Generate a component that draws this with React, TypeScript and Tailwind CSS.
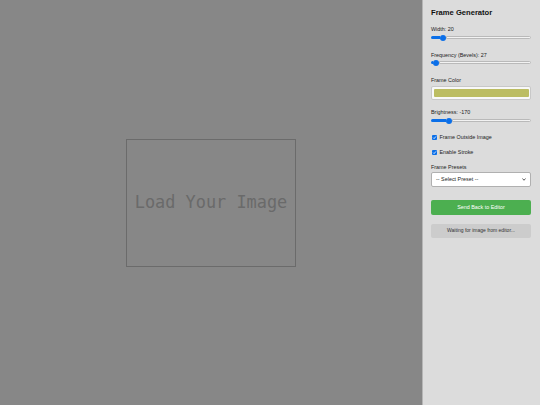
import React from "react";

function Slider({ fill }: { fill: string }) {
  return (
    <div className="flex items-center h-[7px] w-full">
      <div className={`${fill} h-[3px] bg-[#0b6fe8] rounded-l-full`} />
      <div className="w-[6px] h-[6px] rounded-full bg-[#0b6fe8] shrink-0" />
      <div className="flex-1 h-[2.5px] bg-[#f2f2f2] border border-[#b9b9b9] rounded-r-full" />
    </div>
  );
}

function Check({ label }: { label: string }) {
  return (
    <div className="flex items-center h-[7px] pl-[1px]">
      <svg width="5" height="5" viewBox="0 0 10 10" className="shrink-0">
        <rect x="0" y="0" width="10" height="10" rx="2" fill="#0b6fe8" />
        <path d="M2.2 5.2 L4.2 7.2 L8 2.8" stroke="#fff" strokeWidth="1.6" fill="none" />
      </svg>
      <span className="ml-[2.5px] text-[5.4px] leading-[7px] text-[#222]">{label}</span>
    </div>
  );
}

export default function App() {
  return (
    <div className="w-[540px] h-[405px] flex font-['Liberation_Sans',Arial,sans-serif]">
      {/* Canvas */}
      <div className="flex-1 bg-[#878787] flex items-center justify-center">
        <div className="w-[170px] h-[128px] border border-[#6b6b6b] flex items-center justify-center">
          <span className="font-['DejaVu_Sans_Mono',monospace] text-[16.9px] text-[#6a6a6a]">
            Load Your Image
          </span>
        </div>
      </div>

      {/* Sidebar */}
      <div className="w-[118px] bg-[#dcdcdc] border-l border-[#b5b5b5] pl-[8px] pr-[9px] pt-[8px] flex flex-col text-[#222]">
        <h2 className="text-[7.6px] leading-[9px] font-bold text-[#111]">Frame Generator</h2>

        <div className="mt-[9px] text-[5.4px] leading-[7px]">Width: 20</div>
        <div className="mt-[1px]"><Slider fill="w-[9px]" /></div>

        <div className="mt-[10.5px] text-[5.4px] leading-[7px]">Frequency (Bevels): 27</div>
        <div className="mt-[0.5px]"><Slider fill="w-[2px]" /></div>

        <div className="mt-[10.5px] text-[5.4px] leading-[7px]">Frame Color</div>
        <div className="mt-[2.5px] h-[13.5px] rounded-[2px] border border-[#c8c8c8] bg-[#f8f8f8] p-[1.5px]">
          <div className="w-full h-full bg-[#bcbd62] rounded-[1px]" />
        </div>

        <div className="mt-[9px] text-[5.4px] leading-[7px]">Brightness: -170</div>
        <div className="mt-[1.5px]"><Slider fill="w-[15px]" /></div>

        <div className="mt-[10px]"><Check label="Frame Outside Image" /></div>
        <div className="mt-[8px]"><Check label="Enable Stroke" /></div>

        <div className="mt-[7.5px] text-[5.4px] leading-[7px]">Frame Presets</div>
        <div className="mt-[1.5px] h-[15px] bg-white border border-[#b0b0b0] rounded-[2px] flex items-center justify-between px-[4px]">
          <span className="text-[5.4px] text-[#222]">-- Select Preset --</span>
          <svg width="4" height="3" viewBox="0 0 8 6">
            <path d="M1 1 L4 4.5 L7 1" stroke="#333" strokeWidth="1.6" fill="none" />
          </svg>
        </div>

        <button className="mt-[13px] h-[15px] w-full bg-[#4caf50] rounded-[2px] text-white text-[5.4px] flex items-center justify-center">
          Send Back to Editor
        </button>
        <button className="mt-[9px] h-[14px] w-full bg-[#cccccc] rounded-[2px] text-[#333] text-[5px] flex items-center justify-center">
          Waiting for image from editor...
        </button>
      </div>
    </div>
  );
}
